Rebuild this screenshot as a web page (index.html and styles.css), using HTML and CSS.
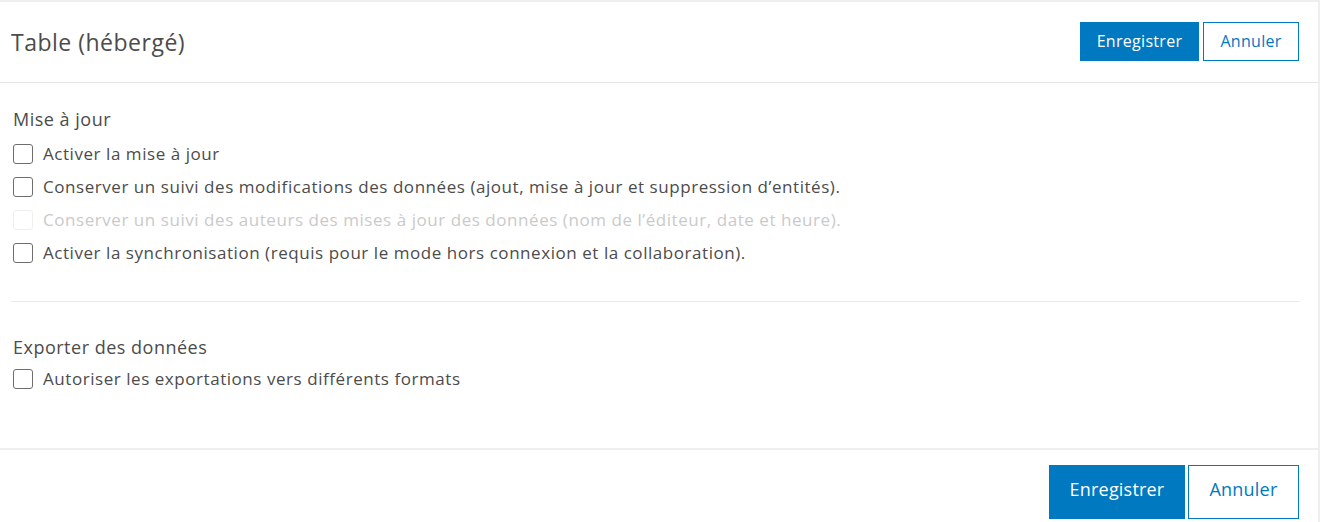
FILE: index.html
```html
<!DOCTYPE html>
<html lang="fr">
<head>
<meta charset="utf-8">
<title>Table (hébergé)</title>
<link rel="stylesheet" href="styles.css">
</head>
<body>
<div class="panel">
  <header class="head">
    <h1 class="title">Table (hébergé)</h1>
    <div class="actions">
      <button class="btn btn-primary">Enregistrer</button>
      <button class="btn btn-outline">Annuler</button>
    </div>
  </header>
  <main class="content">
    <section class="group">
      <h2 class="group-title">Mise à jour</h2>
      <label class="check"><span class="box"></span>Activer la mise à jour</label>
      <label class="check"><span class="box"></span>Conserver un suivi des modifications des données (ajout, mise à jour et suppression d’entités).</label>
      <label class="check disabled"><span class="box"></span>Conserver un suivi des auteurs des mises à jour des données (nom de l’éditeur, date et heure).</label>
      <label class="check"><span class="box"></span>Activer la synchronisation (requis pour le mode hors connexion et la collaboration).</label>
    </section>
    <hr class="divider">
    <section class="group group-export">
      <h2 class="group-title">Exporter des données</h2>
      <label class="check"><span class="box"></span>Autoriser les exportations vers différents formats</label>
    </section>
  </main>
  <footer class="foot">
    <button class="btn btn-primary btn-lg">Enregistrer</button>
    <button class="btn btn-outline btn-lg">Annuler</button>
  </footer>
</div>
</body>
</html>
```

FILE: styles.css
```css
* { box-sizing: border-box; }
html, body { margin: 0; padding: 0; background: #fff; }
body {
  font-family: "Open Sans", "Lato", sans-serif;
  color: #4c4c4c;
}
.panel {
  width: 1320px;
  height: 522px;
  border-top: 2px solid #efefef;
  border-right: 2px solid #efefef;
  display: flex;
  flex-direction: column;
}
.head {
  height: 81px;
  flex: none;
  border-bottom: 1px solid #e6e6e6;
  display: flex;
  align-items: flex-start;
  justify-content: space-between;
  padding: 20px 19px 0 11px;
}
.title {
  margin: 5px 0 0;
  font-weight: 400;
  font-size: 23px;
  line-height: 30px;
  letter-spacing: 0.5px;
  color: #4c4c4c;
}
.actions { display: flex; gap: 4px; }
.btn {
  font-family: inherit;
  font-size: 16px;
  letter-spacing: 0.3px;
  height: 39px;
  padding: 0 0 2px;
  border: 1px solid #0079c1;
  cursor: pointer;
}
.btn-primary { background: #0079c1; color: #fff; width: 119px; }
.btn-outline { background: #fff; color: #0079c1; width: 96px; }
.btn-lg { font-size: 18px; letter-spacing: 0.2px; height: 54px; padding-bottom: 6px; }
.btn-lg.btn-primary { width: 136px; }
.btn-lg.btn-outline { width: 111px; }
.content {
  flex: 1;
  padding: 24px 19px 0 11px;
}
.group { display: flex; flex-direction: column; }
.group-title {
  margin: 0 0 6px 2px;
  font-weight: 400;
  font-size: 18px;
  line-height: 24px;
  letter-spacing: 0.5px;
  color: #4c4c4c;
}
.check {
  display: flex;
  align-items: center;
  height: 33px;
  font-size: 17px;
  letter-spacing: 0.55px;
  color: #4c4c4c;
  padding-left: 2px;
}
.box {
  width: 20px;
  height: 20px;
  border: 1.5px solid #6e6e6e;
  border-radius: 3px;
  margin-right: 10px;
  flex: none;
}
.check.disabled { color: #cacaca; }
.check.disabled .box { border-color: #efefef; }
.divider {
  border: 0;
  border-top: 1px solid #e8e8e8;
  margin: 32px 0 0;
}
.group-export { padding-top: 33px; }
.group-export .group-title { margin-bottom: 3px; }
.foot {
  height: 74px;
  flex: none;
  border-top: 2px solid #efefef;
  display: flex;
  justify-content: flex-end;
  align-items: flex-start;
  gap: 3px;
  padding: 15px 19px 0 0;
}
```
